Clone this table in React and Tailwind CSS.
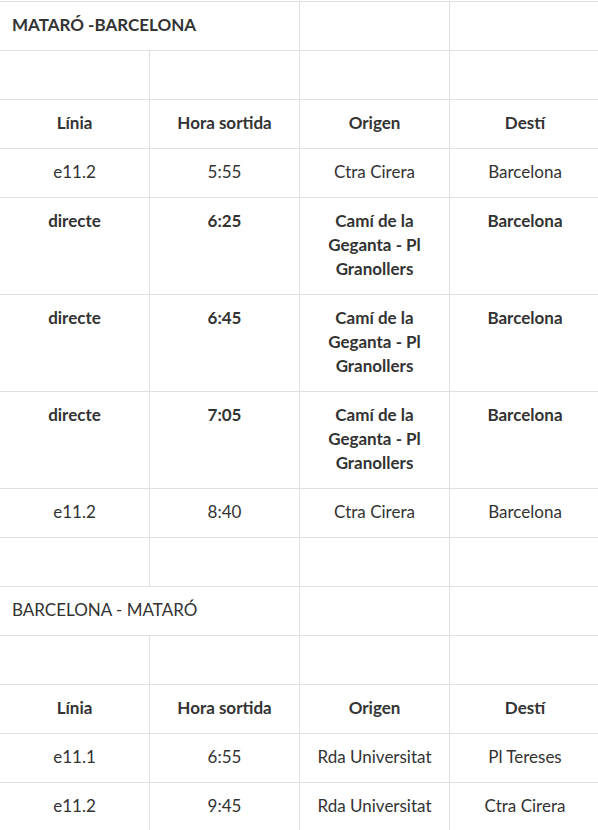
import React from "react";

const cell = "border border-[#e0e0e0] px-3 pt-[11px] pb-[13px] align-top text-center";
const cellL = "border border-[#e0e0e0] px-3 pt-[11px] pb-[13px] align-top text-left";

function Empty() {
  return (
    <tr>
      <td className={cell}>&nbsp;</td>
      <td className={cell}>&nbsp;</td>
      <td className={cell}>&nbsp;</td>
      <td className={cell}>&nbsp;</td>
    </tr>
  );
}

function Head() {
  return (
    <tr className="font-bold">
      <td className={cell}>Línia</td>
      <td className={cell}>Hora sortida</td>
      <td className={cell}>Origen</td>
      <td className={cell}>Destí</td>
    </tr>
  );
}

function Row({ a, b, c, d, bold }) {
  return (
    <tr className={bold ? "font-bold" : ""}>
      <td className={cell}>{a}</td>
      <td className={cell}>{b}</td>
      <td className={cell}>{c}</td>
      <td className={cell}>{d}</td>
    </tr>
  );
}

const camí = (
  <>
    Camí de la
    <br />
    Geganta - Pl
    <br />
    Granollers
  </>
);

export default function App() {
  return (
    <div className="w-[598px] h-[830px] overflow-hidden bg-white">
      <table
        className="mt-px -ml-px w-[601px] table-fixed border-collapse text-[17px] leading-6 text-[#333333]"
        style={{ fontFamily: "Lato, 'Noto Sans', sans-serif" }}
      >
        <colgroup>
          <col className="w-[150px]" />
          <col className="w-[150px]" />
          <col className="w-[150px]" />
          <col className="w-[151px]" />
        </colgroup>
        <tbody>
          <tr>
            <td colSpan={2} className={cellL + " font-bold"}>
              MATARÓ -BARCELONA
            </td>
            <td className={cell}>&nbsp;</td>
            <td className={cell}>&nbsp;</td>
          </tr>
          <Empty />
          <Head />
          <Row a="e11.2" b="5:55" c="Ctra Cirera" d="Barcelona" />
          <Row a="directe" b="6:25" c={camí} d="Barcelona" bold />
          <Row a="directe" b="6:45" c={camí} d="Barcelona" bold />
          <Row a="directe" b="7:05" c={camí} d="Barcelona" bold />
          <Row a="e11.2" b="8:40" c="Ctra Cirera" d="Barcelona" />
          <Empty />
          <tr>
            <td colSpan={2} className={cellL}>
              BARCELONA - MATARÓ
            </td>
            <td className={cell}>&nbsp;</td>
            <td className={cell}>&nbsp;</td>
          </tr>
          <Empty />
          <Head />
          <Row a="e11.1" b="6:55" c="Rda Universitat" d="Pl Tereses" />
          <Row a="e11.2" b="9:45" c="Rda Universitat" d="Ctra Cirera" />
        </tbody>
      </table>
    </div>
  );
}
